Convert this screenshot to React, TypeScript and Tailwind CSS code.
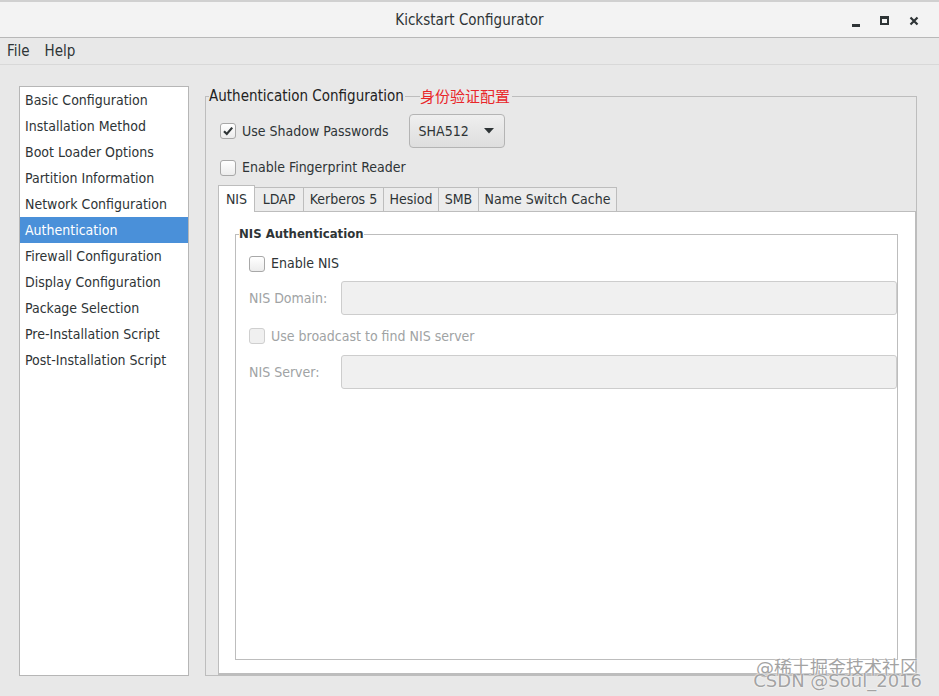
import * as React from "react";

const font = { fontFamily: '"DejaVu Sans Condensed", "DejaVu Sans", sans-serif' };

const sections = [
  "Basic Configuration",
  "Installation Method",
  "Boot Loader Options",
  "Partition Information",
  "Network Configuration",
  "Authentication",
  "Firewall Configuration",
  "Display Configuration",
  "Package Selection",
  "Pre-Installation Script",
  "Post-Installation Script",
];

const tabs: { label: string; w: string }[] = [
  { label: "NIS", w: "w-[37px]" },
  { label: "LDAP", w: "w-[50px]" },
  { label: "Kerberos 5", w: "w-[81px]" },
  { label: "Hesiod", w: "w-[56px]" },
  { label: "SMB", w: "w-[41px]" },
  { label: "Name Switch Cache", w: "w-[139px]" },
];

function Check({ checked, disabled }: { checked?: boolean; disabled?: boolean }) {
  return (
    <span
      className={`flex h-[16px] w-[16px] shrink-0 items-center justify-center rounded-[3px] border ${
        disabled ? "border-[#cfcfcf] bg-[#f0f0f0]" : "border-[#a8a8a8] bg-gradient-to-b from-white to-[#ececec]"
      }`}
    >
      {checked && (
        <svg width="12" height="12" viewBox="0 0 12 12">
          <path d="M2 6.2 L4.8 9 L10.2 2.6" fill="none" stroke="#2e3436" strokeWidth="2.2" />
        </svg>
      )}
    </span>
  );
}

function Entry() {
  return <div className="h-[34px] flex-1 rounded-[3px] border border-[#cdcdcd] bg-[#f0f0f0]" />;
}

export default function App() {
  return (
    <div className="relative flex h-[696px] w-[939px] flex-col overflow-hidden bg-[#e8e8e8] text-[14px] text-[#2e3436]" style={font}>
      {/* title bar */}
      <div className="relative flex h-[38px] shrink-0 items-center justify-center border-b border-[#b8b8b8] border-t-2 border-t-[#d0d0d0] bg-[#f3f3f3]">
        <span className="mt-[1px] text-[15px] font-medium text-[#2e3436]">Kickstart Configurator</span>
        <div className="absolute right-[20px] top-[12px] flex items-center gap-[20px]">
          <span className="mt-[10px] h-[3px] w-[8px] bg-[#2e3436]" />
          <span className="h-[9px] w-[9px] border-2 border-t-[3px] border-[#2e3436]" />
          <svg width="10" height="10" viewBox="0 0 10 10">
            <path d="M1.5 1.5 L8.5 8.5 M8.5 1.5 L1.5 8.5" stroke="#2e3436" strokeWidth="2.2" />
          </svg>
        </div>
      </div>

      {/* menu bar */}
      <div className="flex h-[27px] shrink-0 items-center gap-[15px] border-b border-[#d8d8d8] px-[7px] pt-[1px] text-[15px]">
        <span>File</span>
        <span>Help</span>
      </div>

      {/* body */}
      <div className="flex flex-1 gap-[16px] pb-[20px] pl-[19px] pr-[22px] pt-[21px]">
        <div className="w-[170px] shrink-0 border border-[#b6b6b6] bg-white">
          {sections.map((s) => (
            <div
              key={s}
              className={`flex h-[26px] items-center pl-[5px] ${s === "Authentication" ? "bg-[#4a90d9] text-white" : "text-[#2e3436]"}`}
            >
              {s}
            </div>
          ))}
        </div>

        <fieldset className="relative flex min-w-0 flex-1 flex-col border border-[#bdbdbd] p-0">
          <legend className="ml-[3px] pr-[1px] text-[15px] leading-[20px] text-[#222]">Authentication Configuration</legend>
          <span
            className="absolute left-[214px] top-[-21px] bg-[#e8e8e8] pr-[2px] text-[15px] text-[#e8262a]"
            style={{ fontFamily: '"Noto Sans CJK SC", sans-serif' }}
          >
            身份验证配置
          </span>

          <div className="flex flex-1 flex-col pl-[14px] pt-[8px]">
            <div className="flex items-center">
              <Check checked />
              <span className="ml-[6px]">Use Shadow Passwords</span>
              <button className="ml-[20px] flex h-[34px] w-[96px] items-center justify-between rounded-[4px] border border-[#b4b4b4] bg-gradient-to-b from-[#efefef] to-[#dedede] pl-[9px] pr-[10px]">
                <span>SHA512</span>
                <svg width="10" height="6" viewBox="0 0 10 6">
                  <path d="M0 0 H10 L5 5.5 Z" fill="#2e3436" />
                </svg>
              </button>
            </div>
            <div className="mt-[9px] flex items-center">
              <Check />
              <span className="ml-[6px]">Enable Fingerprint Reader</span>
            </div>

            {/* notebook */}
            <div className="-ml-[2px] mt-[8px] flex flex-1 flex-col">
              <div className="flex h-[25px] items-end">
                {tabs.map((t, i) => (
                  <div
                    key={t.label}
                    className={`${t.w} flex items-center justify-center border border-[#bdbdbd] ${
                      i === 0
                        ? "relative z-10 -mb-px h-[27px] border-b-0 bg-white"
                        : "-ml-px h-[24px] border-b-0 bg-[#ececec]"
                    }`}
                  >
                    {t.label}
                  </div>
                ))}
              </div>
              <div className="flex flex-1 flex-col border border-b-2 border-[#bdbdbd] bg-white pb-[13px] pl-[16px] pr-[17px] pt-[13px]">
                <fieldset className="flex flex-1 flex-col border border-[#bdbdbd] p-0">
                  <legend className="ml-[3px] text-[13px] font-bold leading-[18px]">NIS Authentication</legend>
                  <div className="flex flex-col pl-[13px] pt-[10px]">
                    <div className="flex items-center">
                      <Check />
                      <span className="ml-[6px]">Enable NIS</span>
                    </div>
                    <div className="mt-[7px] flex items-center">
                      <span className="w-[92px] text-[#a0a3a4]">NIS Domain:</span>
                      <Entry />
                    </div>
                    <div className="mt-[2px] flex h-[38px] items-center">
                      <Check disabled />
                      <span className="ml-[6px] text-[#a0a3a4]">Use broadcast to find NIS server</span>
                    </div>
                    <div className="flex items-center">
                      <span className="w-[92px] text-[#a0a3a4]">NIS Server:</span>
                      <Entry />
                    </div>
                  </div>
                </fieldset>
              </div>
            </div>
          </div>
        </fieldset>
      </div>

      {/* watermark */}
      <div
        className="pointer-events-none absolute bottom-[9px] right-[17px] flex flex-col items-end text-[18px] leading-[13px] text-[#a3a3a3]"
        style={{ fontFamily: '"DejaVu Sans", "Noto Sans CJK SC", sans-serif', textShadow: "0 0 2px #fff, 0 0 1px #fff" }}
      >
        <span className="mr-[4px]">@稀土掘金技术社区</span>
        <span>CSDN @Soul_2016</span>
      </div>
    </div>
  );
}
